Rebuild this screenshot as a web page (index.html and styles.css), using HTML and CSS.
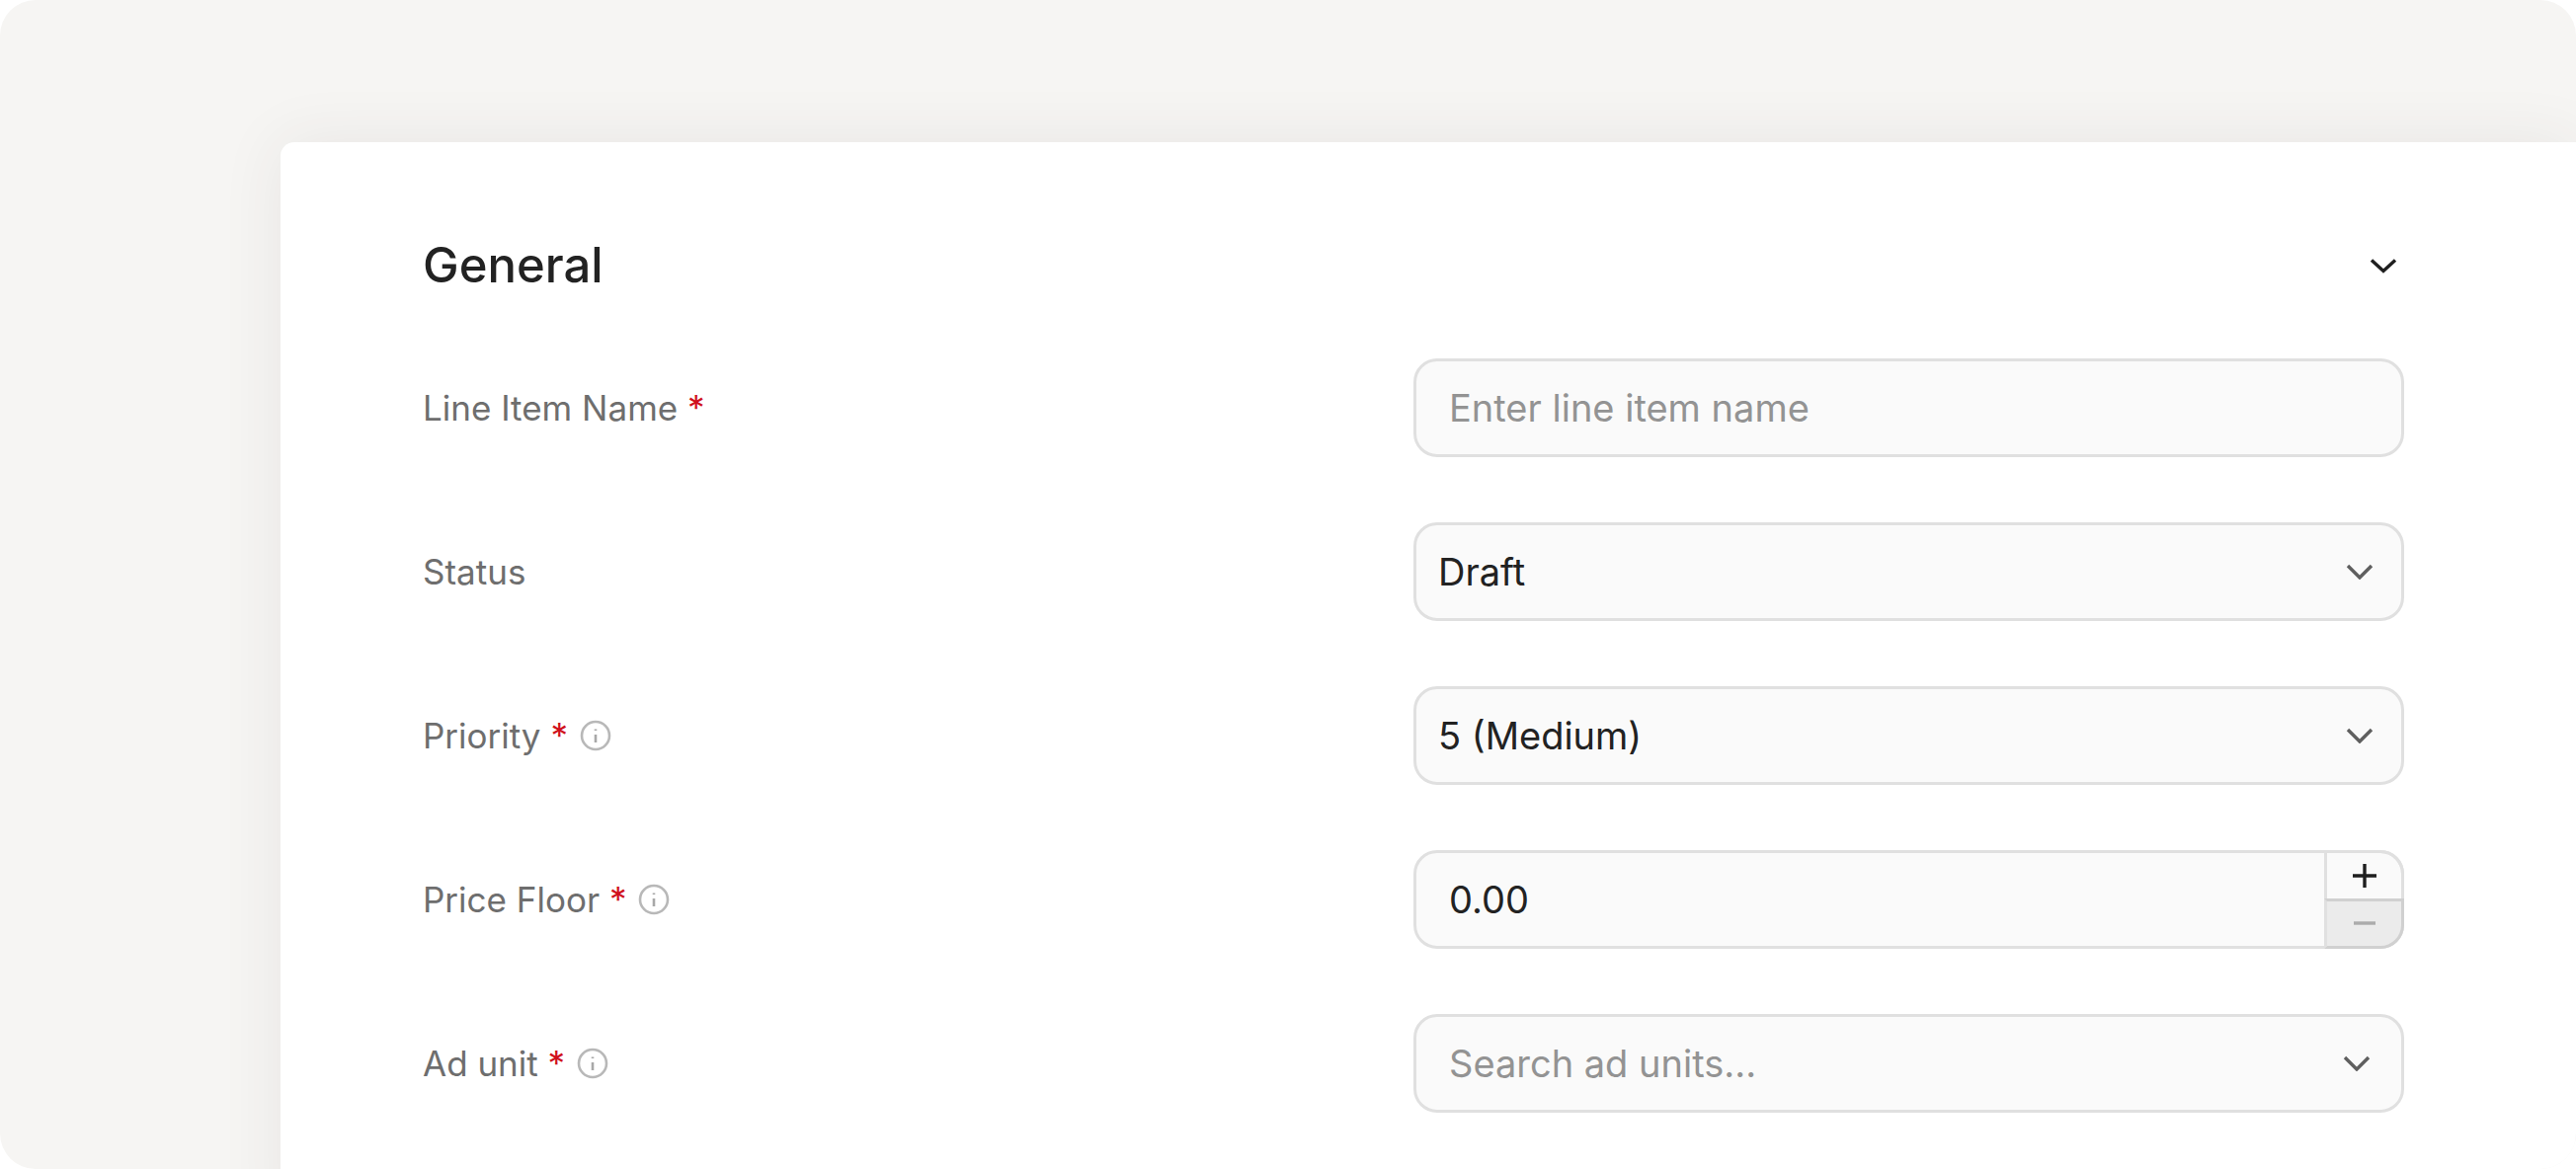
FILE: index.html
```html
<!DOCTYPE html>
<html lang="en">
<head>
<meta charset="utf-8">
<title>General</title>
<link rel="stylesheet" href="styles.css">
</head>
<body>
<div class="shell">
  <main class="card">
    <header class="head">
      <h2 class="title">General</h2>
      <svg class="collapse" viewBox="0 0 28 16" width="28" height="16"><path d="M2 2.5 14 13.5 26 2.5"/></svg>
    </header>
    <div class="rows">
      <div class="row">
        <div class="label">Line Item Name <span class="req">*</span></div>
        <div class="field"><span class="ph">Enter line item name</span></div>
      </div>
      <div class="row">
        <div class="label">Status</div>
        <div class="field select"><span class="val">Draft</span><svg class="caret" viewBox="0 0 28 16" width="28" height="16"><path d="M2 2 14 14 26 2"/></svg></div>
      </div>
      <div class="row">
        <div class="label">Priority <span class="req">*</span><svg class="info" viewBox="0 0 32 32" width="32" height="32"><circle cx="16" cy="16" r="14"/><path d="M16 15v8M16 9.5v1.5"/></svg></div>
        <div class="field select"><span class="val">5 (Medium)</span><svg class="caret" viewBox="0 0 28 16" width="28" height="16"><path d="M2 2 14 14 26 2"/></svg></div>
      </div>
      <div class="row">
        <div class="label">Price Floor <span class="req">*</span><svg class="info" viewBox="0 0 32 32" width="32" height="32"><circle cx="16" cy="16" r="14"/><path d="M16 15v8M16 9.5v1.5"/></svg></div>
        <div class="field number">
          <span class="num">0.00</span>
          <div class="stepper">
            <div class="step plusbox"><svg viewBox="0 0 24 24" width="24" height="24"><path class="plus" d="M0 12H24M12 0V24"/></svg></div>
            <div class="step minus"><svg viewBox="0 0 24 24" width="24" height="24"><path class="dash" d="M1 12H23"/></svg></div>
          </div>
        </div>
      </div>
      <div class="row">
        <div class="label">Ad unit <span class="req">*</span><svg class="info" viewBox="0 0 32 32" width="32" height="32"><circle cx="16" cy="16" r="14"/><path d="M16 15v8M16 9.5v1.5"/></svg></div>
        <div class="field search"><span class="ph">Search ad units...</span><svg class="caret" viewBox="0 0 28 16" width="28" height="16"><path d="M2 2 14 14 26 2"/></svg></div>
      </div>
    </div>
  </main>
</div>
</body>
</html>
```
FILE: styles.css
```css
* { box-sizing: border-box; }
html, body { margin: 0; height: 100%; background: #fff; overflow: hidden; }
body { font-family: Inter, "Liberation Sans", sans-serif; }
.shell {
  height: 1184px;
  background: #f6f5f3;
  border-radius: 36px;
  padding: 144px 0 0 284px;
  overflow: hidden;
}
.card {
  height: 1100px;
  background: #fff;
  border-radius: 14px 0 0 0;
  box-shadow: 0 0 64px rgba(60, 56, 48, 0.08);
  padding: 93px 174px 0 144px;
}
.head {
  display: flex;
  align-items: center;
  justify-content: space-between;
  height: 64px;
  padding-right: 7px;
}
.title {
  margin: 0;
  font-size: 49px;
  font-weight: 500;
  color: #222;
  line-height: 64px;
}
.collapse path, .caret path {
  fill: none;
  stroke-width: 3.4;
}
.collapse path { stroke: #1f1f1f; }
.caret path { stroke: #5f5f5f; }
.rows {
  display: flex;
  flex-direction: column;
  gap: 66px;
  margin-top: 62px;
}
.row {
  display: grid;
  grid-template-columns: 1003px 1003px;
  align-items: center;
  height: 100px;
}
.label {
  display: flex;
  align-items: center;
  font-size: 35px;
  color: #6e6e6e;
  white-space: pre;
}
.req { color: #d0101c; }
.info { margin-left: 12px; }
.info circle, .info path {
  fill: none;
  stroke: #b8b8b8;
  stroke-width: 2.6;
}
.info path { stroke: #a8a8a8; }
.field {
  display: flex;
  align-items: center;
  justify-content: space-between;
  height: 100px;
  background: #fafafa;
  border: 3px solid #e0e0e0;
  border-radius: 24px;
  padding: 0 33px;
  font-size: 38px;
}
.ph { color: #939393; }
.val, .num { color: #222; }
.select { padding: 0 28px 0 22px; }
.search { padding-right: 31px; }
.number { padding-right: 0; }
.stepper {
  display: flex;
  flex-direction: column;
  width: 81px;
  height: 100px;
  margin-right: -3px;
  flex: none;
}
.step {
  flex: 1;
  display: flex;
  align-items: center;
  justify-content: center;
  border-left: 3px solid #e0e0e0;
}
.plusbox {
  border-top: 3px solid #e0e0e0;
  border-right: 3px solid #e0e0e0;
  border-radius: 0 24px 0 0;
  border-bottom: 0;
}
.minus {
  background: #ebebeb;
  border: 3px solid #d0d0d0;
  border-left-color: #e0e0e0;
  border-radius: 0 0 24px 0;
}
.plus, .dash { fill: none; stroke-width: 3.4; }
.plus { stroke: #1f1f1f; }
.dash { stroke: #ababab; }
```
